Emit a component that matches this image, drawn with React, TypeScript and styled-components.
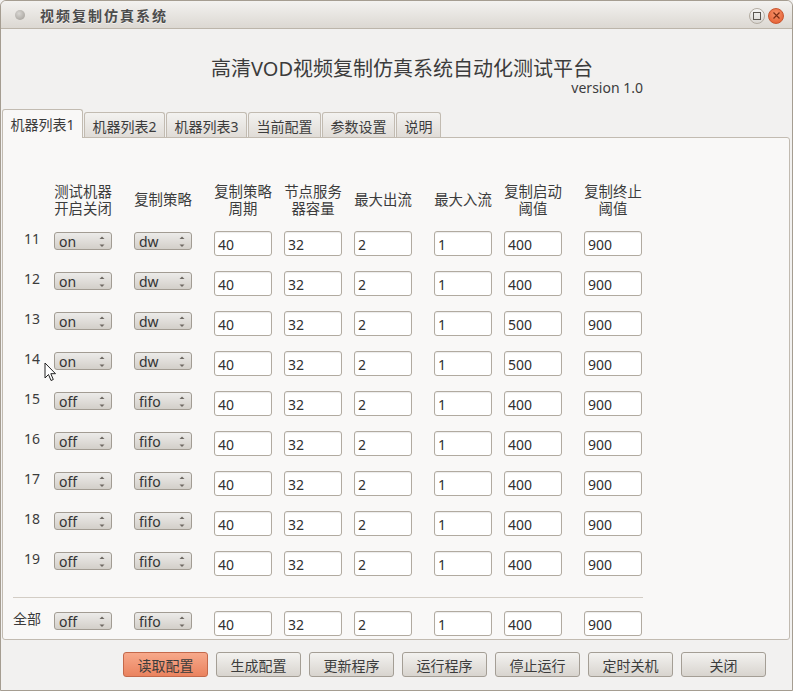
import React from "react";
import styled, { createGlobalStyle, css } from "styled-components";

const GlobalStyle = createGlobalStyle`
  html, body { margin: 0; padding: 0; background: #f2f1f0; }
  body { font-family: "Noto Sans", "Noto Sans CJK SC", sans-serif; color: #3c3c3c; }
  * { box-sizing: border-box; }
`;

const Window = styled.div`
  position: relative;
  width: 793px;
  height: 691px;
  border: 1px solid #a59d91;
  border-radius: 6px 6px 0 0;
  background: #f2f1f0;
  display: flex;
  flex-direction: column;
  overflow: hidden;
`;

const TitleBar = styled.div`
  height: 28px;
  flex: none;
  display: flex;
  align-items: center;
  padding: 0 8px 0 14px;
  background: linear-gradient(#f3f2f0, #dcd8d2);
  border-bottom: 1px solid #bcb5aa;
  border-radius: 5px 5px 0 0;
`;

const MenuDot = styled.span`
  width: 10px;
  height: 10px;
  border-radius: 50%;
  background: radial-gradient(circle at 40% 35%, #d8d6d2, #9e9a94);
  margin-right: 15px;
  flex: none;
`;

const TitleText = styled.span`
  font-family: "Noto Sans CJK SC", sans-serif;
  font-weight: 700;
  font-size: 14px;
  letter-spacing: 2px;
  color: #4c4c4c;
  text-shadow: 0 1px 0 rgba(255, 255, 255, 0.6);
`;

const TitleButtons = styled.div`
  margin-left: auto;
  display: flex;
  gap: 3px;
  align-items: center;
  margin-top: 2px;
`;

const RoundButton = styled.span<{ $close?: boolean }>`
  width: 16px;
  height: 16px;
  border-radius: 50%;
  display: flex;
  align-items: center;
  justify-content: center;
  ${(p) =>
    p.$close
      ? css`
          background: radial-gradient(circle at 50% 35%, #f7936a, #e2582b);
          border: 1px solid #c9552f;
        `
      : css`
          background: linear-gradient(#f8f7f6, #d9d6d1);
          border: 1px solid #b3aca2;
        `}
`;

const Header = styled.div`
  flex: none;
  display: flex;
  flex-direction: column;
  padding-top: 28px;
`;

const Heading = styled.div`
  font-size: 20px;
  line-height: 24px;
  text-align: center;
  padding-left: 11px;
  color: #3c3c3c;
`;

const Version = styled.div`
  font-size: 14px;
  line-height: 18px;
  margin-top: -2px;
  text-align: right;
  padding-right: 149px;
  color: #3c3c3c;
`;

const TabBar = styled.div`
  flex: none;
  margin-top: 12px;
  height: 28px;
  display: flex;
  align-items: flex-end;
  padding-left: 1px;
  gap: 1px;
  position: relative;
  z-index: 1;
`;

const Tab = styled.div<{ $active?: boolean }>`
  font-size: 14px;
  padding: 0 7.5px;
  border: 1px solid #c2bbb1;
  border-bottom: none;
  border-radius: 3px 3px 0 0;
  display: flex;
  align-items: center;
  color: #3c3c3c;
  ${(p) =>
    p.$active
      ? css`
          height: 29px;
          margin-bottom: -1px;
          background: #f9f8f7;
          padding-bottom: 1px;
        `
      : css`
          height: 25px;
          background: linear-gradient(#f3f2f0, #e0dcd7);
          padding-top: 1px;
        `}
`;

const Panel = styled.div`
  flex: 1;
  min-height: 0;
  overflow: hidden;
  margin: 0 2px 0 1px;
  background: #f9f8f7;
  border: 1px solid #c2bbb1;
  border-radius: 0 3px 3px 3px;
  padding: 44px 0 0 10px;
`;

const gridCols = css`
  display: grid;
  grid-template-columns: 41px 80px 80px 70px 70px 80px 70px 80px 58px;
`;

const HeaderRow = styled.div`
  ${gridCols};
  height: 35px;
  align-items: center;
`;

const ColHead = styled.div`
  width: 58px;
  font-size: 14.4px;
  line-height: 17px;
  text-align: center;
  color: #3c3c3c;
  white-space: nowrap;
`;

const Rows = styled.div`
  margin-top: 14px;
`;

const Row = styled.div`
  ${gridCols};
  height: 40px;
  align-items: start;
`;

const RowLabel = styled.div<{ $indent?: number }>`
  font-size: 14px;
  line-height: 17px;
  margin-top: -1px;
  padding-left: ${(p) => p.$indent ?? 0}px;
  color: #3c3c3c;
`;

const Spin = styled.div`
  width: 58px;
  height: 18px;
  margin-top: 1px;
  border: 1px solid #a29c93;
  border-radius: 3px;
  background: linear-gradient(#ecebe9, #d3cfc9);
  display: flex;
  align-items: center;
  padding-left: 4px;
  font-size: 14px;
  color: #333;
`;

const SpinArrows = styled.svg`
  margin-left: auto;
  margin-right: 6px;
`;

const Field = styled.div`
  width: 58px;
  height: 25px;
  border: 1px solid #b1aaa0;
  border-radius: 3px;
  background: #fff;
  box-shadow: inset 0 1px 1px rgba(0, 0, 0, 0.08);
  display: flex;
  align-items: center;
  padding: 1px 0 0 3px;
  font-size: 14px;
  color: #2f2f2f;
`;

const Separator = styled.div`
  width: 630px;
  height: 1px;
  background: #d3cdc5;
  margin-top: 6px;
`;

const AllRow = styled(Row)`
  margin-top: 13px;
  height: 26px;
`;

const ButtonBar = styled.div`
  flex: none;
  display: flex;
  justify-content: flex-end;
  gap: 8px;
  padding: 12px 26px 13px 0;
`;

const Button = styled.div<{ $primary?: boolean }>`
  width: 85px;
  height: 25px;
  border-radius: 3px;
  display: flex;
  align-items: center;
  justify-content: center;
  font-size: 14px;
  color: #3c3c3c;
  ${(p) =>
    p.$primary
      ? css`
          background: linear-gradient(#f7a98b, #ea835f);
          border: 1px solid #c4694b;
        `
      : css`
          background: linear-gradient(#f3f2f0, #d8d4ce);
          border: 1px solid #a49e95;
        `}
`;

const Cursor = styled.svg`
  position: absolute;
  left: 43px;
  top: 361px;
`;

const Arrows = () => (
  <SpinArrows width="6" height="13" viewBox="0 0 6 13">
    <path d="M0.5 4 L3 1.5 L5.5 4 Z" fill="#6e6963" />
    <path d="M0.5 9.5 L3 12 L5.5 9.5 Z" fill="#6e6963" />
  </SpinArrows>
);

type RowData = {
  id: string;
  on: string;
  strat: string;
  vals: string[];
};

const rows: RowData[] = [
  { id: "11", on: "on", strat: "dw", vals: ["40", "32", "2", "1", "400", "900"] },
  { id: "12", on: "on", strat: "dw", vals: ["40", "32", "2", "1", "400", "900"] },
  { id: "13", on: "on", strat: "dw", vals: ["40", "32", "2", "1", "500", "900"] },
  { id: "14", on: "on", strat: "dw", vals: ["40", "32", "2", "1", "500", "900"] },
  { id: "15", on: "off", strat: "fifo", vals: ["40", "32", "2", "1", "400", "900"] },
  { id: "16", on: "off", strat: "fifo", vals: ["40", "32", "2", "1", "400", "900"] },
  { id: "17", on: "off", strat: "fifo", vals: ["40", "32", "2", "1", "400", "900"] },
  { id: "18", on: "off", strat: "fifo", vals: ["40", "32", "2", "1", "400", "900"] },
  { id: "19", on: "off", strat: "fifo", vals: ["40", "32", "2", "1", "400", "900"] },
];

const headers: string[][] = [
  ["测试机器", "开启关闭"],
  ["复制策略"],
  ["复制策略", "周期"],
  ["节点服务", "器容量"],
  ["最大出流"],
  ["最大入流"],
  ["复制启动", "阈值"],
  ["复制终止", "阈值"],
];

const tabs = ["机器列表1", "机器列表2", "机器列表3", "当前配置", "参数设置", "说明"];
const buttons = ["读取配置", "生成配置", "更新程序", "运行程序", "停止运行", "定时关机", "关闭"];

const Cells = ({ d }: { d: RowData }) => (
  <>
    <Spin>
      {d.on}
      <Arrows />
    </Spin>
    <Spin>
      {d.strat}
      <Arrows />
    </Spin>
    {d.vals.map((v, i) => (
      <Field key={i}>{v}</Field>
    ))}
  </>
);

export default function App() {
  return (
    <>
      <GlobalStyle />
      <Window>
        <TitleBar>
          <MenuDot />
          <TitleText>视频复制仿真系统</TitleText>
          <TitleButtons>
            <RoundButton>
              <svg width="8" height="8" viewBox="0 0 8 8">
                <rect x="0.5" y="0.5" width="7" height="7" fill="none" stroke="#5a5650" strokeWidth="1" />
              </svg>
            </RoundButton>
            <RoundButton $close>
              <svg width="7" height="7" viewBox="0 0 7 7">
                <path d="M0.5 0.5 L6.5 6.5 M6.5 0.5 L0.5 6.5" stroke="#7a2d14" strokeWidth="1.2" />
              </svg>
            </RoundButton>
          </TitleButtons>
        </TitleBar>

        <Header>
          <Heading>高清VOD视频复制仿真系统自动化测试平台</Heading>
          <Version>version 1.0</Version>
        </Header>

        <TabBar>
          {tabs.map((t, i) => (
            <Tab key={t} $active={i === 0}>
              {t}
            </Tab>
          ))}
        </TabBar>

        <Panel>
          <HeaderRow>
            <div />
            {headers.map((h, i) => (
              <ColHead key={i}>
                {h.map((line, j) => (
                  <div key={j}>{line}</div>
                ))}
              </ColHead>
            ))}
          </HeaderRow>
          <Rows>
            {rows.map((d) => (
              <Row key={d.id}>
                <RowLabel $indent={11}>{d.id}</RowLabel>
                <Cells d={d} />
              </Row>
            ))}
          </Rows>
          <Separator />
          <AllRow>
            <RowLabel>全部</RowLabel>
            <Cells d={{ id: "all", on: "off", strat: "fifo", vals: ["40", "32", "2", "1", "400", "900"] }} />
          </AllRow>
        </Panel>

        <ButtonBar>
          {buttons.map((b, i) => (
            <Button key={b} $primary={i === 0}>
              {b}
            </Button>
          ))}
        </ButtonBar>

        <Cursor width="13" height="20" viewBox="0 0 13 20">
          <path
            d="M1 1 L1 16 L4.5 12.5 L7 18.5 L9.3 17.5 L6.8 11.7 L11.5 11.7 Z"
            fill="#fff"
            stroke="#222"
            strokeWidth="1"
            strokeLinejoin="round"
          />
        </Cursor>
      </Window>
    </>
  );
}
